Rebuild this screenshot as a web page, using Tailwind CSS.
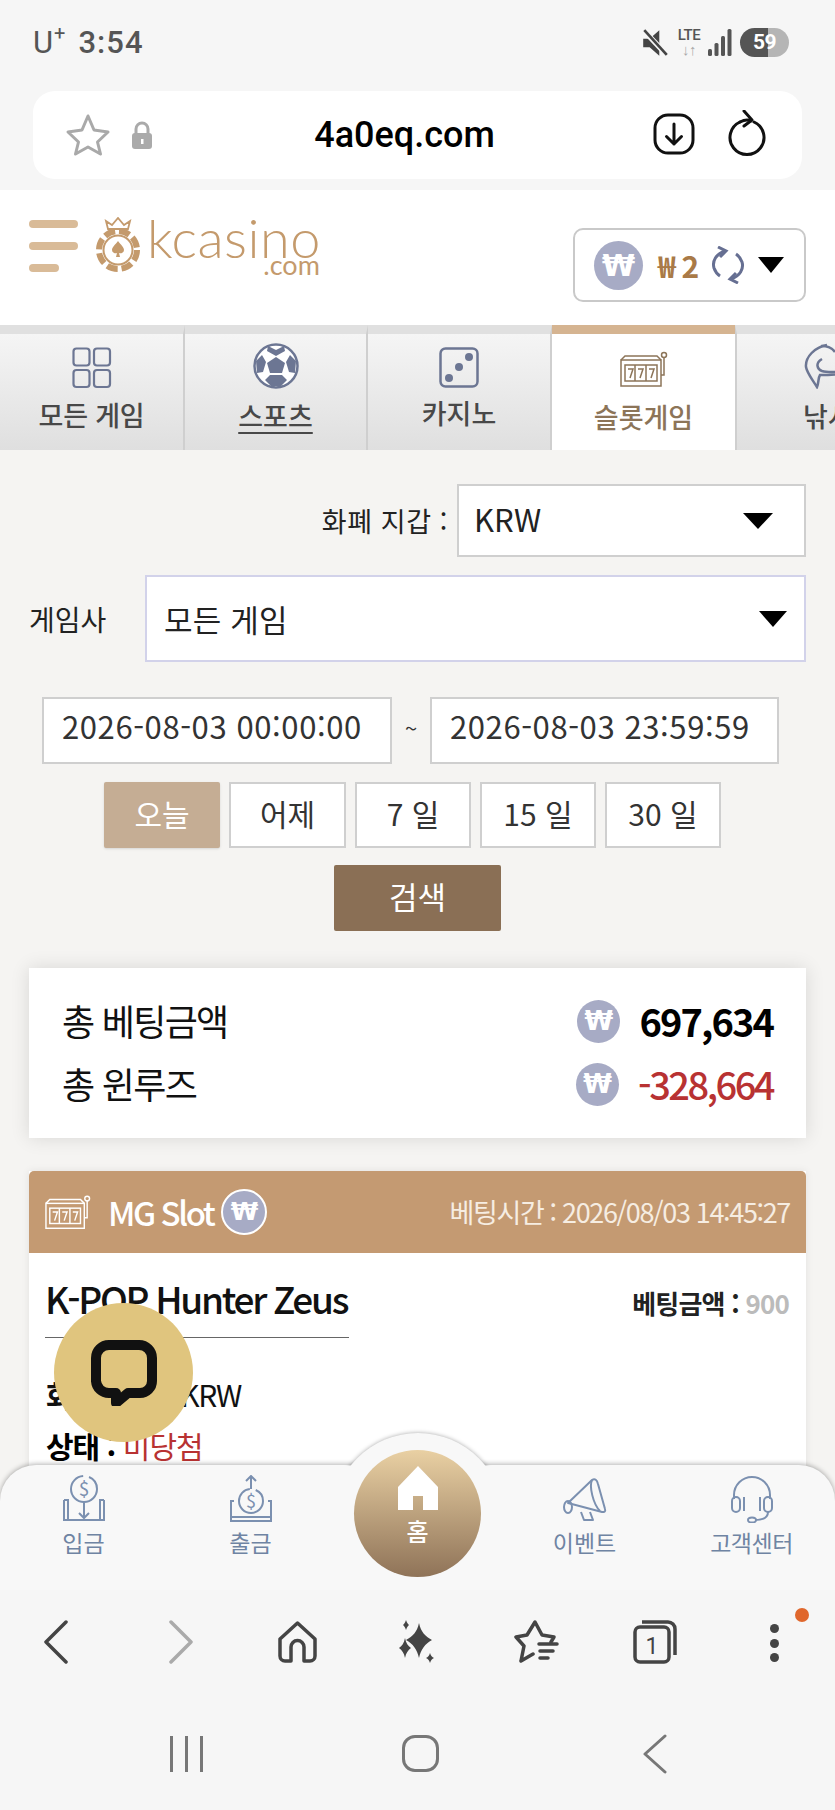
<!DOCTYPE html>
<html lang="ko">
<head>
  <meta charset="UTF-8" />
  <title>kcasino</title>
  <script src="https://cdn.jsdelivr.net/npm/@tailwindcss/browser@4"></script>
</head>
<body class="bg-[#f5f5f5] font-['Noto_Sans_CJK_KR','Noto_Sans',sans-serif] text-black">
<div class="relative w-[835px] h-[1810px] overflow-hidden flex flex-col">

  <!-- status bar + address bar -->
  <div class="h-[190px] shrink-0 bg-[#f6f6f6] px-[33px]">
    <div class="h-[91px] flex items-center justify-between font-['Roboto'] text-[#555]">
      <div class="flex items-start text-[31px] leading-none font-medium tracking-[1px] -mt-[6px]">
        <span class="font-normal">U</span><span class="text-[20px] font-normal -mt-[4px] mr-[12px]">+</span><span>3:54</span>
      </div>
      <div class="flex items-center gap-[6px] -mt-[6px] mr-[13px]">
        <svg width="28" height="30" viewBox="0 0 26 28"><path d="M2 10h6l9-8v24l-9-8H2z" fill="#444"/><path d="M3 3l21 22" stroke="#f6f6f6" stroke-width="5"/><path d="M3 2l21 23" stroke="#444" stroke-width="2.500"/></svg>
        <div class="flex flex-col items-center w-[26px] ml-[1px] text-[15px] leading-[15px] font-medium text-[#555] tracking-[-0.5px]"><span>LTE</span><span class="text-[15px] leading-[14px] font-bold text-[#aaa]">↓↑</span></div>
        <svg class="mr-[2px]" width="24" height="28" viewBox="0 0 24 28" fill="#555"><rect x="0" y="20" width="4" height="7" rx="1.500"/><rect x="6.500" y="14" width="4" height="13" rx="1.500"/><rect x="13" y="7" width="4" height="20" rx="1.500"/><rect x="19.500" y="0" width="4" height="27" rx="1.500"/></svg>
        <div class="w-[49px] h-[29px] rounded-full bg-[linear-gradient(90deg,#555_0,#555_58%,#b5b5b5_58%)] text-white text-[21px] font-bold leading-[29px] text-center tracking-[-0.5px]">59</div>
      </div>
    </div>
    <div class="h-[88px] bg-white rounded-[22px] flex items-center px-[32px]">
      <svg width="46" height="44" viewBox="0 0 46 44" fill="none" stroke="#a9a9a9" stroke-width="3" stroke-linejoin="round"><path d="M23 3l6 14 14 2-10.500 10 3 12-12.500-7-12.500 7 3-12L3 19l14-2z"/></svg>
      <svg class="ml-[19px]" width="24" height="30" viewBox="0 0 24 30"><path d="M6 14V9a6 6 0 0 1 12 0v5" fill="none" stroke="#aaa" stroke-width="3"/><rect x="2" y="13" width="20" height="16" rx="3" fill="#aaa"/><rect x="11" y="19" width="2.500" height="5" fill="#fff"/></svg>
      <div class="flex-1 text-center text-[36px] font-['Roboto'] font-medium leading-none ml-[2px]">4a0eq.com</div>
      <svg class="-mt-[2px]" width="42" height="44" viewBox="0 0 42 44" fill="none" stroke="#111" stroke-width="3"><rect x="2" y="3" width="38" height="38" rx="13"/><path d="M21 12v20M13.500 24.500L21 32l7.500-7.500" stroke-linecap="round" stroke-linejoin="round"/></svg>
      <svg class="ml-[32px] mr-[3px] -mt-[3px]" width="40" height="48" viewBox="0 0 40 48" fill="none" stroke="#111" stroke-width="3" stroke-linecap="round" stroke-linejoin="round"><path d="M13 12a17 17 0 1 0 14 0"/><path d="M13 12c3-1.500 7-3 11-1M17 1l8 9-8 6"/></svg>
    </div>
  </div>

  <!-- site area -->
  <div class="flex-1 min-h-0 bg-[#f5f4f2] overflow-hidden">
    <!-- header -->
    <div class="h-[135px] bg-white flex items-start justify-between pl-[29px] pr-[29px] pt-[19px]">
      <div class="flex items-start">
        <div class="flex flex-col gap-[14px] pt-[11px] w-[50px]">
          <span class="block w-[49px] h-[8px] rounded-full bg-[#d9bb98]"></span>
          <span class="block w-[49px] h-[8px] rounded-full bg-[#d9bb98]"></span>
          <span class="block w-[30px] h-[8px] rounded-full bg-[#d9bb98]"></span>
        </div>
        <svg class="ml-[15px] mt-[8px]" width="48" height="56" viewBox="0 0 48 56">
          <path d="M14 12l-2-8 6 4 6-7 6 7 6-4-2 8z" fill="none" stroke="#c49a6c" stroke-width="1.800"/>
          <circle cx="24" cy="33" r="19" fill="none" stroke="#c49a6c" stroke-width="6" stroke-dasharray="11 4"/>
          <circle cx="24" cy="33" r="14.500" fill="none" stroke="#c49a6c" stroke-width="2"/>
          <path d="M24 24c3 4 6 6 6 9a3.500 3.500 0 0 1-5 3l1 4h-4l1-4a3.500 3.500 0 0 1-5-3c0-3 3-5 6-9z" fill="#c49a6c"/>
        </svg>
        <div class="ml-[5px] flex flex-col items-end text-[#c49a6c] font-['Lato'] font-light">
          <span class="text-[54px] leading-[42px] mt-[8px] tracking-[0.5px]">kcasino</span>
          <span class="text-[27px] leading-[18px] -mt-[3px] mr-[1px] font-normal">.com</span>
        </div>
      </div>
      <div class="w-[233px] h-[74px] mt-[19px] rounded-[10px] border-2 border-[#c9c9c9] flex items-center pl-[19px]">
        <span class="w-[49px] h-[49px] rounded-full bg-[#a7abc5] text-white font-['DejaVu_Sans'] text-[30px] font-bold leading-[49px] text-center">₩</span>
        <span class="ml-[15px] text-[#a97a47] text-[30px] font-bold leading-none tracking-[-0.5px]">₩ 2</span>
        <svg class="ml-[12px]" width="34" height="38" viewBox="0 0 34 38" fill="none" stroke="#666f92" stroke-width="3"><path d="M14 5C5 8 1 15 3 22c1 3 3 6 6 8"/><path d="M7 1l8 4-6 6"/><path d="M20 33c9-3 13-10 11-17-1-3-3-6-6-8"/><path d="M27 37l-8-4 6-6"/></svg>
        <span class="ml-[13px] w-0 h-0 border-x-[13px] border-x-transparent border-t-[16px] border-t-black"></span>
      </div>
    </div>

    <!-- tabs -->
    <div class="h-[125px] flex overflow-hidden">
      <div class="w-[185px] shrink-0 border-t-[9px] border-[#e0e0e0] border-r-2 border-r-[#cfcfcf] bg-[linear-gradient(#f5f5f5,#dfdfdf)] flex flex-col items-center pt-[13px]">
        <svg width="40" height="42" viewBox="0 0 40 42" fill="none" stroke="#6c7693" stroke-width="2.200"><rect x="1.500" y="1.500" width="16" height="17" rx="3"/><rect x="22" y="1.500" width="16" height="17" rx="3"/><rect x="1.500" y="23" width="16" height="17" rx="3"/><rect x="22" y="23" width="16" height="17" rx="3"/></svg>
        <span class="text-[27px] leading-[34px] mt-[9px] font-medium text-[#484848] tracking-[-0.2px] whitespace-nowrap">모든 게임</span>
      </div>
      <div class="w-[183px] shrink-0 border-t-[9px] border-[#e0e0e0] border-r-2 border-r-[#cfcfcf] bg-[linear-gradient(#f5f5f5,#dfdfdf)] flex flex-col items-center pt-[9px]">
        <svg width="46" height="46" viewBox="0 0 46 46"><circle cx="23" cy="23" r="21.500" fill="#fff" stroke="#6c7693" stroke-width="2.500"/><path d="M23 14l9 6-3 10H17l-3-10z" fill="#6c7693"/><path d="M15 3l8 4 8-4 1 5-9 5-9-5zM3 18l6-6 4 7-3 10-6 1zM43 18l-6-6-4 7 3 10 6 1zM12 37l5-5h12l5 5-6 6H18z" fill="#6c7693"/></svg>
        <span class="text-[27px] leading-[34px] mt-[10px] font-medium text-[#484848] underline underline-offset-[5px]">스포츠</span>
      </div>
      <div class="w-[184px] shrink-0 border-t-[9px] border-[#e0e0e0] border-r-2 border-r-[#cfcfcf] bg-[linear-gradient(#f5f5f5,#dfdfdf)] flex flex-col items-center pt-[13px]">
        <svg width="40" height="42" viewBox="0 0 40 42"><rect x="1.500" y="1.500" width="37" height="38" rx="5" fill="none" stroke="#6c7693" stroke-width="2.500"/><circle cx="30" cy="10" r="4" fill="#6c7693"/><circle cx="20" cy="20" r="4" fill="#6c7693"/><circle cx="10" cy="31" r="4" fill="#6c7693"/></svg>
        <span class="text-[27px] leading-[34px] mt-[7px] font-medium text-[#484848]">카지노</span>
      </div>
      <div class="w-[183px] shrink-0 border-t-[9px] border-[#d5b491] bg-white flex flex-col items-center pt-[17px]">
        <svg width="48" height="36" viewBox="0 0 48 36" fill="none" stroke="#8c7458" stroke-width="1.500"><rect x="1" y="9" width="40" height="26"/><rect x="5" y="14" width="32" height="16"/><path d="M15 14v16M26 14v16M41 24h3V6"/><circle cx="44" cy="4" r="2.500"/><path d="M1 9l4-4h32l4 4"/><path d="M8 18h5l-3 9M18 18h5l-3 9M29 18h5l-3 9"/></svg>
        <span class="text-[27px] leading-[34px] mt-[13px] font-medium text-[#8c7458]">슬롯게임</span>
      </div>
      <div class="flex-1 min-w-0 border-t-[9px] border-[#e0e0e0] border-l-2 border-l-[#cfcfcf] bg-[linear-gradient(#f5f5f5,#dfdfdf)] pl-[66px] pt-[9px] overflow-hidden whitespace-nowrap">
        <svg width="46" height="46" viewBox="0 0 46 46" fill="none" stroke="#6c7693" stroke-width="2.500"><path d="M24 2C12 4 2 14 3 24c1 6 6 12 11 20 2-5 1-9 3-12 6 0 16 0 24-2-8-2-16 0-22-2-5-2-7-8 0-12"/><path d="M18 3c4 0 10 0 14 6"/></svg>
        <span class="block text-[27px] leading-[34px] mt-[10px] font-medium text-[#484848]">낚시</span>
      </div>
    </div>

    <!-- filters -->
    <div class="px-[29px]">
      <div class="flex items-center justify-end mt-[34px] gap-[9px]">
        <span class="text-[27px] leading-none tracking-[0.6px] text-[#222] whitespace-nowrap">화폐 지갑 :</span>
        <div class="w-[349px] h-[73px] bg-white border-2 border-[#cfcfcf] flex items-center justify-between pl-[15px] pr-[31px]">
          <span class="text-[31px] leading-[40px] -mt-[3px] text-[#222]">KRW</span>
          <span class="w-0 h-0 border-x-[15px] border-x-transparent border-t-[16px] border-t-black"></span>
        </div>
      </div>
      <div class="flex items-center justify-between mt-[18px]">
        <span class="text-[28px] leading-none text-[#222]">게임사</span>
        <div class="w-[661px] h-[87px] bg-white border-2 border-[#d2d2ea] flex items-center justify-between pl-[17px] pr-[17px]">
          <span class="text-[31px] leading-[40px] tracking-[0.2px] text-[#222]">모든 게임</span>
          <span class="w-0 h-0 border-x-[14px] border-x-transparent border-t-[16px] border-t-black"></span>
        </div>
      </div>
      <div class="flex items-center mt-[35px] ml-[13px] text-[#333]">
        <div class="w-[350px] h-[67px] bg-white border-2 border-[#cfcfcf] text-[31px] leading-[53px] pl-[18px] tracking-[0.6px] whitespace-nowrap">2026-08-03 00:00:00</div>
        <span class="w-[38px] text-center text-[22px] -mt-[6px]">~</span>
        <div class="w-[349px] h-[67px] bg-white border-2 border-[#cfcfcf] text-[31px] leading-[53px] pl-[18px] tracking-[0.6px] whitespace-nowrap">2026-08-03 23:59:59</div>
      </div>
      <div class="flex justify-start gap-[9px] mt-[18px] ml-[75px] text-[30px] text-[#333]">
        <div class="w-[116px] h-[66px] bg-[#c5ad94] text-white rounded-[2px] leading-[62px] text-center shadow-sm">오늘</div>
        <div class="w-[117px] h-[66px] bg-white border-2 border-[#cfcfcf] leading-[58px] text-center">어제</div>
        <div class="w-[116px] h-[66px] bg-white border-2 border-[#cfcfcf] leading-[58px] text-center">7 일</div>
        <div class="w-[116px] h-[66px] bg-white border-2 border-[#cfcfcf] leading-[58px] text-center">15 일</div>
        <div class="w-[116px] h-[66px] bg-white border-2 border-[#cfcfcf] leading-[58px] text-center">30 일</div>
      </div>
      <div class="w-[167px] h-[66px] mx-auto mt-[17px] bg-[#8a6f55] rounded-[2px] text-white text-[31px] leading-[62px] text-center">검색</div>

      <!-- totals -->
      <div class="mt-[37px] h-[170px] bg-white shadow-[0_0_18px_rgba(0,0,0,0.12)] pl-[33px] pr-[33px] pt-[22px]">
        <div class="flex items-center h-[62px]">
          <span class="text-[36px] leading-[46px] -mt-[3px] tracking-[-1.700px] text-[#111] flex-1">총 베팅금액</span>
          <span class="w-[43px] h-[43px] rounded-full bg-[#a7abc5] text-white font-['DejaVu_Sans'] font-bold text-[26px] leading-[43px] text-center">₩</span>
          <span class="ml-[19px] text-[38px] leading-[46px] font-bold tracking-[-1.900px]">697,634</span>
        </div>
        <div class="flex items-center h-[62px] mt-[1px]">
          <span class="text-[36px] leading-[46px] -mt-[3px] tracking-[-1.700px] text-[#111] flex-1">총 윈루즈</span>
          <span class="w-[43px] h-[43px] rounded-full bg-[#a7abc5] text-white font-['DejaVu_Sans'] font-bold text-[26px] leading-[43px] text-center">₩</span>
          <span class="ml-[19px] text-[38px] leading-[46px] font-medium tracking-[-2.500px] text-[#b83232]">-328,664</span>
        </div>
      </div>

      <!-- bet card -->
      <div class="mt-[33px] bg-white shadow-[0_0_8px_rgba(0,0,0,0.08)] h-[500px]">
        <div class="h-[82px] bg-[#c49a72] rounded-t-[5px] flex items-center pl-[16px] pr-[16px] text-white">
          <svg width="46" height="36" viewBox="0 0 48 36" fill="none" stroke="#fff" stroke-width="1.500"><rect x="1" y="9" width="40" height="26"/><rect x="5" y="14" width="32" height="16"/><path d="M15 14v16M26 14v16M41 24h3V6"/><circle cx="44" cy="4" r="2.500"/><path d="M1 9l4-4h32l4 4"/><path d="M8 18h5l-3 9M18 18h5l-3 9M29 18h5l-3 9"/></svg>
          <span class="ml-[17px] text-[33px] leading-[44px] font-medium tracking-[-2.400px] whitespace-nowrap">MG Slot</span>
          <span class="ml-[8px] w-[46px] h-[46px] rounded-full bg-[#a7abc5] border-2 border-white font-['DejaVu_Sans'] font-bold text-[25px] leading-[42px] text-center">₩</span>
          <span class="ml-auto text-[27px] leading-[36px] tracking-[-1.350px] text-[#f6ede2] whitespace-nowrap">베팅시간 : 2026/08/03 14:45:27</span>
        </div>
        <div class="px-[17px] relative">
          <div class="flex justify-between items-start">
            <div class="w-[304px] border-b border-[#666] pt-[19px] pb-[13px] -ml-[1px] text-[37px] leading-[52px] tracking-[-2.300px] font-medium text-[#111] whitespace-nowrap">K-POP Hunter Zeus</div>
            <div class="pt-[32px] text-[26px] font-bold tracking-[-0.8px] leading-[36px] text-[#222] whitespace-nowrap">베팅금액 : <span class="text-[#bbb]">900</span></div>
          </div>
          <div class="mt-[36px] text-[30px] leading-[40px] tracking-[-1.400px] text-[#111]"><b>화폐 지갑 :</b> KRW</div>
          <div class="mt-[11px] text-[30px] leading-[40px] tracking-[-1px]"><b>상태 :</b> <span class="text-[#b83232]">미당첨</span></div>
        </div>
      </div>
    </div>
  </div>

  <!-- chat button -->
  <div class="absolute left-[54px] top-[1303px] w-[139px] h-[139px] rounded-full bg-[#e0c57e] flex items-center justify-center">
    <svg width="66" height="66" viewBox="0 0 66 66"><path d="M18 5h30a13 13 0 0 1 13 13v23a12 12 0 0 1-12 12H37L25 63V53h-7A13 13 0 0 1 5 41V18A13 13 0 0 1 18 5z" fill="none" stroke="#111" stroke-width="10" stroke-linejoin="round"/></svg>
  </div>

  <!-- site bottom nav -->
  <div class="absolute left-0 top-[1465px] w-[835px] h-[125px] bg-[#f8f8f8] rounded-t-[36px] shadow-[0_-1px_5px_rgba(0,0,0,0.3)] flex">
    <div class="w-[167px] flex flex-col items-center pt-[10px] text-[#6f84a3]">
      <svg width="46" height="48" viewBox="0 0 46 48" fill="none" stroke="#7b90b0" stroke-width="2"><circle cx="23" cy="14" r="13" stroke-dasharray="60 6"/><text x="23" y="21" font-size="19" text-anchor="middle" fill="#7b90b0" stroke="none">$</text><path d="M23 27v15M18 38l5 5 5-5"/><path d="M3 25h4v20h32V25h4M3 25v20h40V25"/></svg>
      <span class="text-[23px] leading-[30px] mt-[4px]">입금</span>
    </div>
    <div class="w-[167px] flex flex-col items-center pt-[10px] text-[#6f84a3]">
      <svg width="46" height="48" viewBox="0 0 46 48" fill="none" stroke="#7b90b0" stroke-width="2"><path d="M23 14V1M18 6l5-5 5 5"/><circle cx="23" cy="26" r="12" stroke-dasharray="55 6"/><text x="23" y="33" font-size="18" text-anchor="middle" fill="#7b90b0" stroke="none">$</text><path d="M6 26H3v20h40V26h-3M3 42h40"/></svg>
      <span class="text-[23px] leading-[30px] mt-[4px]">출금</span>
    </div>
    <div class="w-[167px]"></div>
    <div class="w-[167px] flex flex-col items-center pt-[12px] text-[#6f84a3]">
      <svg width="46" height="46" viewBox="0 0 46 46" fill="none" stroke="#7b90b0" stroke-width="2" stroke-linejoin="round"><path d="M6 26L30 3c3-2 5 0 6 4l7 25c1 3-1 3-3 3z"/><path d="M30 3c-3 6 1 24 8 31"/><ellipse cx="6" cy="30" rx="4" ry="6"/><path d="M19 35l3 8h9l-3-8"/></svg>
      <span class="text-[23px] leading-[30px] mt-[4px]">이벤트</span>
    </div>
    <div class="w-[167px] flex flex-col items-center pt-[10px] text-[#6f84a3]">
      <svg width="44" height="48" viewBox="0 0 44 48" fill="none" stroke="#7b90b0" stroke-width="2"><path d="M4 24V20a18 18 0 0 1 36 0v4"/><rect x="2" y="22" width="8" height="15" rx="4"/><rect x="34" y="22" width="8" height="15" rx="4"/><path d="M38 37c0 6-6 8-13 8"/><ellipse cx="22" cy="45" rx="4" ry="2.500"/><path d="M14 22v14M30 22v14"/></svg>
      <span class="text-[23px] leading-[30px] mt-[4px] tracking-[-0.5px] whitespace-nowrap">고객센터</span>
    </div>
  </div>
  <!-- home button -->
  <div class="absolute left-[332px] top-[1426px] w-[172px] h-[40px] overflow-hidden">
    <div class="w-[172px] h-[172px] mt-[7px] rounded-full bg-[#f8f8f8] shadow-[0_0_4px_rgba(0,0,0,0.35)]"></div>
  </div>
  <div class="absolute left-[354px] top-[1450px] w-[127px] h-[127px] rounded-full bg-[linear-gradient(#e9d0a3,#8f7358)] flex flex-col items-center pt-[15px] text-white">
    <svg width="42" height="46" viewBox="0 0 42 46" fill="#fff"><path d="M21 1L41 22v23H26V31h-10v14H1V22z"/></svg>
    <span class="text-[24px] leading-[26px] mt-[7px] font-medium">홈</span>
  </div>

  <!-- browser toolbar -->
  <div class="absolute left-0 bottom-0 w-[835px] h-[220px] bg-[#f6f6f6]">
    <div class="h-[125px] flex items-start relative">
      <svg class="absolute left-[42px] top-[30px]" width="28" height="44" viewBox="0 0 28 44" fill="none" stroke="#444" stroke-width="3.500" stroke-linecap="round" stroke-linejoin="round"><path d="M24 2L4 22l20 20"/></svg>
      <svg class="absolute left-[167px] top-[30px]" width="28" height="44" viewBox="0 0 28 44" fill="none" stroke="#aaa" stroke-width="3.500" stroke-linecap="round" stroke-linejoin="round"><path d="M4 2l20 20L4 42"/></svg>
      <svg class="absolute left-[277px] top-[31px]" width="41" height="42" viewBox="0 0 41 42" fill="none" stroke="#444" stroke-width="3.500" stroke-linejoin="round"><path d="M20.500 2L38 18v17a5 5 0 0 1-5 5h-6V26a6 6 0 0 0-13 0v14H8a5 5 0 0 1-5-5V18z"/></svg>
      <svg class="absolute left-[396px] top-[29px]" width="42" height="46" viewBox="0 0 42 44" fill="#444"><path d="M23 3c2 9 6 13 13 17-7 4-11 9-13 18-2-9-6-14-13-18 7-4 11-8 13-17z"/><path d="M10 0c1 3 2 4 3 5-1 1-2 2-3 5-1-3-2-4-3-5 1-1 2-2 3-5zM9 18c1 5 3 8 6 10-3 2-5 5-6 10-1-5-3-8-6-10 3-2 5-5 6-10zM34 33c1 3 2 4 4 5-2 1-3 2-4 5-1-3-2-4-4-5 2-1 3-2 4-5z"/></svg>
      <svg class="absolute left-[513px] top-[30px]" width="46" height="44" viewBox="0 0 46 44" fill="none" stroke="#444" stroke-width="3.500" stroke-linejoin="round" stroke-linecap="round"><path d="M8 41l3-15-8-9 11-2 8-13 7 13 12 2-3 5M8 41l12-7"/><path d="M26 24h18M27 31h13M27 38h8"/></svg>
      <svg class="absolute left-[633px] top-[29px]" width="44" height="45" viewBox="0 0 44 45" fill="none" stroke="#444" stroke-width="3.500"><rect x="2" y="8" width="34" height="35" rx="5"/><path d="M9 3h26a7 7 0 0 1 7 7v26" /><text x="19" y="35" font-size="23" font-family="Roboto" text-anchor="middle" fill="#444" stroke="none">1</text></svg>
      <div class="absolute left-[770px] top-[34px] flex flex-col gap-[5.500px]">
        <span class="w-[9px] h-[9px] rounded-full bg-[#444]"></span>
        <span class="w-[9px] h-[9px] rounded-full bg-[#444]"></span>
        <span class="w-[9px] h-[9px] rounded-full bg-[#444]"></span>
      </div>
      <span class="absolute left-[795px] top-[18px] w-[14px] h-[14px] rounded-full bg-[#e0672c]"></span>
    </div>
    <div class="relative h-[95px]">
      <div class="absolute left-[170px] top-[21px] flex gap-[12px]">
        <span class="w-[3px] h-[36px] bg-[#777]"></span><span class="w-[3px] h-[36px] bg-[#777]"></span><span class="w-[3px] h-[36px] bg-[#777]"></span>
      </div>
      <span class="absolute left-[402px] top-[20px] w-[37px] h-[37px] rounded-[13px] border-[3.500px] border-[#777]"></span>
      <svg class="absolute left-[642px] top-[19px]" width="26" height="40" viewBox="0 0 26 40" fill="none" stroke="#777" stroke-width="3" stroke-linecap="round" stroke-linejoin="round"><path d="M23 2L3 20l20 18"/></svg>
    </div>
  </div>
</div>
</body>
</html>
